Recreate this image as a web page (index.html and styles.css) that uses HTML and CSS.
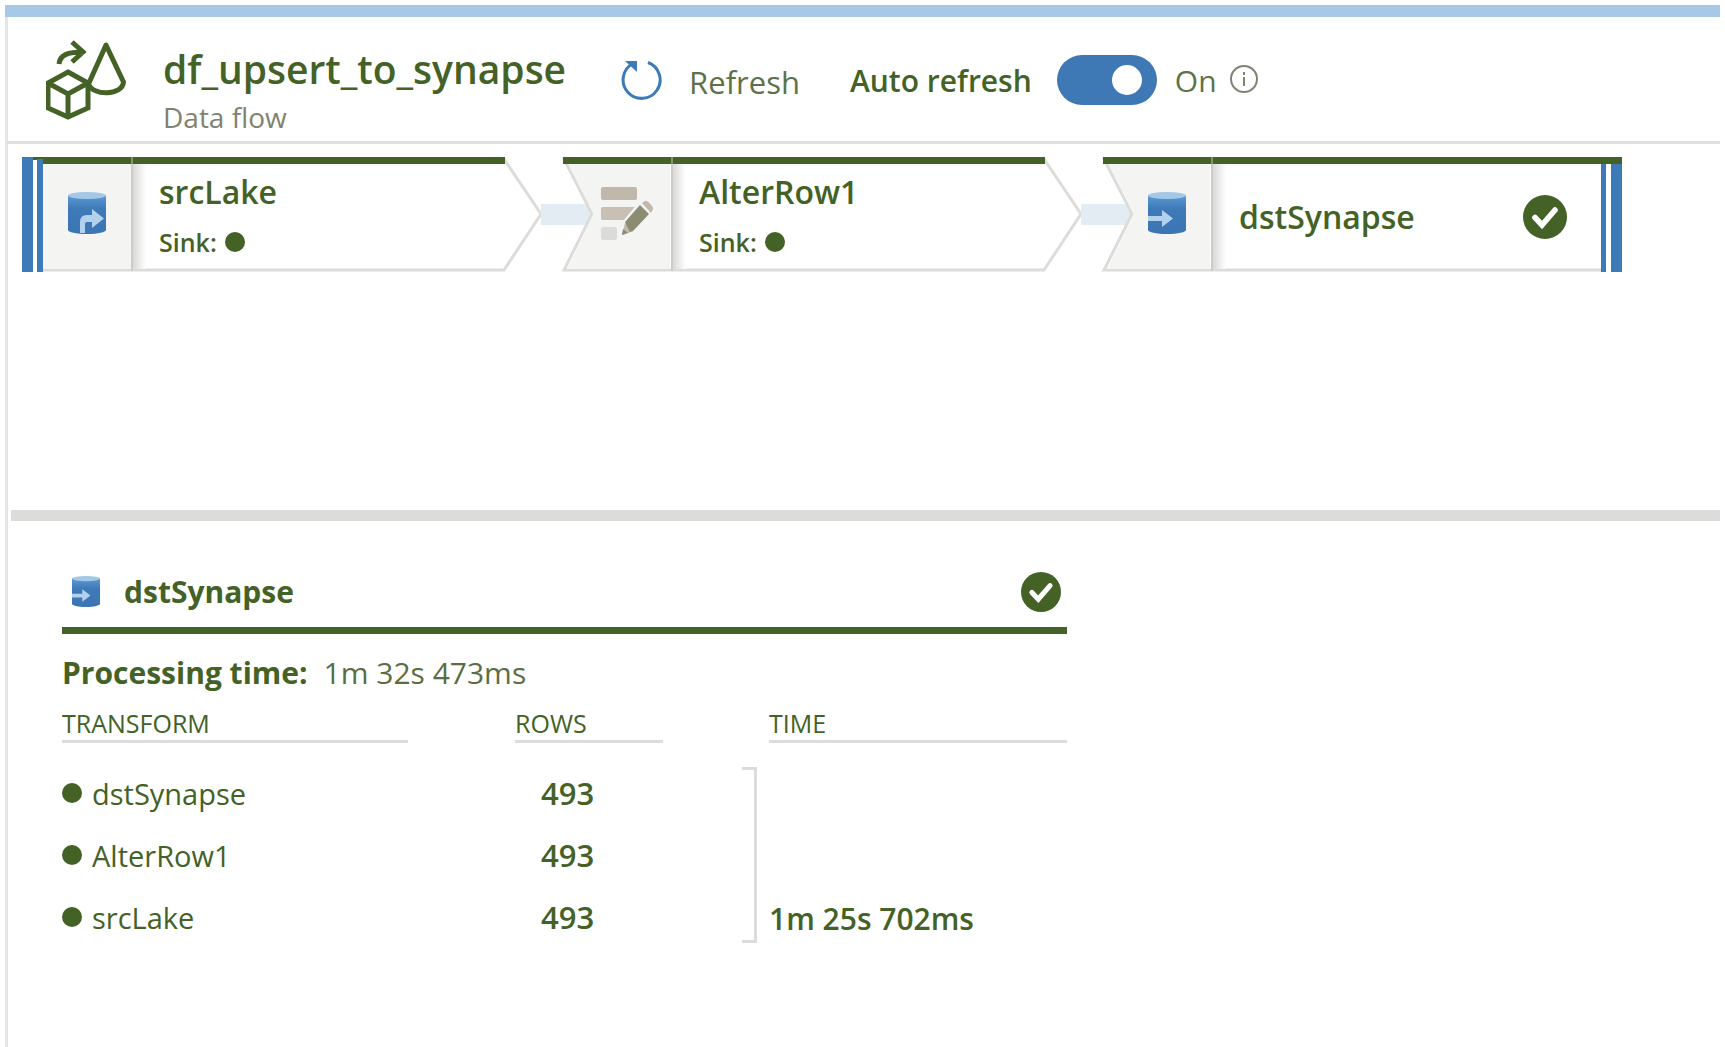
FILE: index.html
```html
<!DOCTYPE html>
<html lang="en">
<head>
<meta charset="utf-8">
<title>df_upsert_to_synapse</title>
<link rel="stylesheet" href="styles.css">
</head>
<body>
<svg class="defs" aria-hidden="true">
  <defs>
    <linearGradient id="cyl" x1="0" y1="0" x2="0" y2="1">
      <stop offset="0" stop-color="#5f9bd3"/><stop offset=".35" stop-color="#3e7ab8"/><stop offset="1" stop-color="#3c75b3"/>
    </linearGradient>
    <linearGradient id="shade" x1="0" y1="0" x2="1" y2="0">
      <stop offset="0" stop-color="#d6d6d5"/><stop offset="1" stop-color="#ffffff"/>
    </linearGradient>
    <symbol id="check" viewBox="0 0 44 44">
      <circle cx="22" cy="22" r="22" fill="#446126"/>
      <path d="M12 22.500l7 7.500L32 15" fill="none" stroke="#fff" stroke-width="5.600" stroke-linecap="round"/>
    </symbol>
    <symbol id="sink" viewBox="0 0 38 42">
      <path d="M0 3v35c0 2 8 4 19 4s19-2 19-4V3z" fill="url(#cyl)"/>
      <ellipse cx="19" cy="3.500" rx="19" ry="3.500" fill="#a3c8e8"/>
      <path d="M0 24h14v-6l11 8.500L14 35v-6H0z" fill="#b3d1ec"/>
    </symbol>
  </defs>
</svg>
<div class="app">
  <header class="header">
    <svg class="flow-icon" viewBox="0 0 80 80" fill="none" stroke="#446126" stroke-width="5" aria-hidden="true">
      <path d="M22 32l20 11v25L22 77 2 68V43z M2 43l20 11 20-11 M22 54v23"/>
      <path d="M60 5L77.500 42c-1 14-31 14-35 2z" stroke-linejoin="round"/>
      <path d="M13 24c1-9 8-12 25-12 M26 2l11 10-11 10"/>
    </svg>
    <div class="titles">
      <h1>df_upsert_to_synapse</h1>
      <p>Data flow</p>
    </div>
    <div class="controls">
      <button class="refresh" type="button">
        <svg viewBox="0 0 42 42" aria-hidden="true"><path d="M12 4.500a18.500 18.500 0 1 0 15-1" fill="none" stroke="#3e7ab8" stroke-width="3"/><path d="M4 2h12v11z" fill="#3e7ab8"/></svg>
        <span>Refresh</span>
      </button>
      <label class="auto" for="auto">Auto refresh</label>
      <input class="switch" id="auto" type="checkbox" role="switch" checked>
      <span class="state">On</span>
      <svg class="info" viewBox="0 0 30 30" fill="none" stroke="#7f8270" stroke-width="2" aria-hidden="true"><circle cx="15" cy="14" r="13"/><path d="M15 12v9M15 7v3"/></svg>
    </div>
  </header>

  <main>
    <section class="graph" aria-label="Graph">
      <article class="node">
        <svg class="shape" viewBox="0 0 520 116" aria-hidden="true">
          <path d="M2 2h480l37 55-37 56H2z" fill="#fff" stroke="#dcdcda" stroke-width="3"/>
          <path d="M21 6h88v106H21z" fill="#f4f4f3"/>
          <path d="M110 6h14v106h-14z" fill="url(#shade)"/>
          <path d="M110 3v111" stroke="#cdccc8" stroke-width="2"/>
          <path d="M11 0h472v7H11z" fill="#446126"/>
          <path d="M109 0h2v7h-2z" fill="#8b8f72"/>
          <path d="M11 3h5v112h-5z" fill="#fff"/>
          <path d="M0 0h11v115H0zM15 2h6v113h-6z" fill="#3e7ab8"/>
        </svg>
        <div class="glyph">
          <svg width="38" height="42" viewBox="0 0 38 42" aria-hidden="true">
            <path d="M0 3v35c0 2 8 4 19 4s19-2 19-4V3z" fill="url(#cyl)"/>
            <ellipse cx="19" cy="3.500" rx="19" ry="3.500" fill="#a3c8e8"/>
            <path d="M12 41V30q0-7 7-7h5v-6l12 9.500L24 36v-6h-5q-2 0-2 2v9z" fill="#b3d1ec"/>
          </svg>
        </div>
        <div class="body"><h2>srcLake</h2><p>Sink: <i class="dot"></i></p></div>
      </article>
      <article class="node">
        <svg class="shape" viewBox="0 0 520 116" aria-hidden="true">
          <path d="M-21 47h51v21h-51z" fill="#e4ecf3"/>
          <path d="M2 2h480l37 55-37 56H2l28-56z" fill="#fff" stroke="#dcdcda" stroke-width="3"/>
          <path d="M6 6h102v106H5l27-55z" fill="#f4f4f3"/>
          <path d="M110 6h14v106h-14z" fill="url(#shade)"/>
          <path d="M110 3v111" stroke="#cdccc8" stroke-width="2"/>
          <path d="M1 0h482v7H1z" fill="#446126"/>
          <path d="M109 0h2v7h-2z" fill="#8b8f72"/>
        </svg>
        <div class="glyph">
          <svg width="54" height="54" viewBox="0 0 54 54" aria-hidden="true">
            <rect x="1" y="1" width="36" height="13" rx="2" fill="#c0b8aa"/>
            <rect x="1" y="21" width="40" height="13" rx="2" fill="#c7c0b3"/>
            <rect x="1" y="41" width="16" height="13" rx="2" fill="#dbdbd9"/>
            <path d="M20 50l3-15 16-19h6l7 7v4L37 48z" fill="#f4f4f3"/>
            <path d="M22 49l3-12 9 8z" fill="#c0b8aa"/>
            <path d="M22 49l1-6 5 4zM25 36l15-17 9 9-15 16-4 2z" fill="#8a8d72"/>
            <path d="M42 17l3-2q2-1 7 5 2 3 0 5l-1 2z" fill="#c0b8aa"/>
          </svg>
        </div>
        <div class="body"><h2>AlterRow1</h2><p>Sink: <i class="dot"></i></p></div>
      </article>
      <article class="node">
        <svg class="shape" viewBox="0 0 520 116" aria-hidden="true">
          <path d="M-21 47h51v21h-51z" fill="#e4ecf3"/>
          <path d="M2 2h510v111H2l28-56z" fill="#fff" stroke="#dcdcda" stroke-width="3"/>
          <path d="M6 6h102v106H5l27-55z" fill="#f4f4f3"/>
          <path d="M110 6h14v106h-14z" fill="url(#shade)"/>
          <path d="M110 3v111" stroke="#cdccc8" stroke-width="2"/>
          <path d="M504 7h5v108h-5z" fill="#fff"/>
          <path d="M499 7h5v108h-5zM509 6h11v109h-11z" fill="#3e7ab8"/>
          <path d="M1 0h519v7H1z" fill="#446126"/>
          <path d="M109 0h2v7h-2z" fill="#8b8f72"/>
        </svg>
        <div class="glyph"><svg width="38" height="42" aria-hidden="true"><use href="#sink"/></svg></div>
        <div class="body single"><h2>dstSynapse</h2><svg width="44" height="44" role="img" aria-label="Succeeded"><use href="#check"/></svg></div>
      </article>
    </section>

    <section class="details">
      <div class="details-head">
        <svg width="28" height="31" aria-hidden="true"><use href="#sink"/></svg>
        <h2>dstSynapse</h2>
        <svg class="done" width="40" height="40" role="img" aria-label="Succeeded"><use href="#check"/></svg>
      </div>
      <p class="processing"><b>Processing time:</b> <span>1m 32s 473ms</span></p>
      <table>
        <colgroup><col class="c-transform"><col class="c-rows"><col></colgroup>
        <thead>
          <tr><th scope="col"><span>TRANSFORM</span></th><th scope="col"><span>ROWS</span></th><th scope="col"><span>TIME</span></th></tr>
        </thead>
        <tbody>
          <tr><td class="name"><i class="dot"></i>dstSynapse</td><td class="count">493</td><td class="time" rowspan="3"><div class="span"><span class="bracket"></span><span>1m 25s 702ms</span></div></td></tr>
          <tr><td class="name"><i class="dot"></i>AlterRow1</td><td class="count">493</td></tr>
          <tr><td class="name"><i class="dot"></i>srcLake</td><td class="count">493</td></tr>
        </tbody>
      </table>
    </section>
  </main>
</div>
</body>
</html>
```
FILE: styles.css
```css
* { box-sizing: border-box; }

body {
  margin: 0;
  padding: 5px 5px 0;
  background: #fff;
  color: #446126;
  font-family: "Open Sans", "Noto Sans", sans-serif;
  font-size: 30px;
}

h1, h2, p { margin: 0; font-weight: 600; }
svg { display: block; flex: none; }
.defs { position: absolute; width: 0; height: 0; }

.app {
  display: flex;
  flex-direction: column;
  min-height: calc(100vh - 5px);
  border-top: 12px solid #a6c9e8;
}
.app > * { border-left: 3px solid #e6e6e5; }
main { flex: 1; }

/* Header */
.header {
  display: flex;
  height: 127px;
  padding: 23px 0 0 38px;
  border-bottom: 3px solid #e0e0de;
}
.flow-icon { width: 80px; height: 80px; }
.titles { margin-left: 37px; }
h1 { font-size: 39px; line-height: 58px; }
.titles p { font-size: 28px; line-height: 38px; font-weight: 400; color: #7f8270; }

.controls { display: flex; align-items: center; height: 80px; margin-left: 55px; }
.refresh {
  display: flex;
  align-items: center;
  gap: 26px;
  padding: 0;
  border: 0;
  background: none;
  font: inherit;
  font-size: 31px;
  color: #5f7148;
  cursor: pointer;
}
.refresh svg { width: 42px; height: 42px; }
.refresh span { padding-top: 4px; }
.auto { margin-left: 50px; font-weight: 600; }
.switch {
  appearance: none;
  display: flex;
  align-items: center;
  justify-content: flex-end;
  width: 100px;
  height: 50px;
  margin: 0 18px 0 25px;
  padding-right: 15px;
  border-radius: 25px;
  background: #3e78b5;
}
.switch::before { content: ""; width: 30px; height: 30px; border-radius: 50%; background: #fff; }
.switch:not(:checked) { justify-content: flex-start; padding-left: 15px; background: #8a8d72; }
.state { color: #5f7148; }
.info { width: 30px; height: 30px; margin-left: 12px; }

/* Graph */
.graph {
  display: flex;
  align-items: flex-start;
  gap: 20px;
  height: 377px;
  margin-left: 3px;
  padding: 13px 0 0 11px;
  border-bottom: 11px solid #dcdcda;
  overflow: hidden;
}
.node { position: relative; display: flex; flex: none; width: 520px; height: 116px; }
.shape { position: absolute; top: 0; left: 0; width: 520px; height: 116px; overflow: visible; }
.glyph { position: relative; display: flex; align-items: center; justify-content: center; width: 112px; padding: 0 0 4px 18px; }
.body { position: relative; flex: 1; padding: 11px 0 0 25px; }
.body h2 { font-size: 32px; line-height: 48px; }
.body p { display: flex; align-items: center; gap: 8px; font-size: 25px; line-height: 52px; }
.single { display: flex; align-items: center; justify-content: space-between; padding: 3px 55px 0 25px; }
.dot { flex: none; width: 20px; height: 20px; border-radius: 50%; background: #446126; }

/* Details */
.details { max-width: 1059px; padding: 41px 0 0 54px; }
.details-head {
  display: flex;
  align-items: center;
  height: 72px;
  padding: 0 6px 6px 10px;
  border-bottom: 7px solid #446126;
}
.details-head h2 { margin-left: 24px; font-size: 30px; font-weight: 700; }
.done { margin-left: auto; }
.processing { display: flex; gap: 16px; line-height: 48px; margin-top: 15px; font-weight: 400; }
.processing span { color: #5a6d44; }

table { width: 100%; table-layout: fixed; border-collapse: collapse; }
.c-transform { width: 453px; }
.c-rows { width: 227px; }
th { padding: 9px 0 19px; text-align: left; font-size: 25px; font-weight: 400; line-height: 34px; }
th span { display: block; border-bottom: 3px solid #dcdcda; }
th:nth-child(1) { padding-right: 107px; }
th:nth-child(2) { padding-right: 79px; }
th:nth-child(3) { padding-left: 27px; }
td { padding: 0; height: 62px; font-weight: 600; }
.name { font-size: 29px; font-weight: 400; }
.name .dot { display: inline-block; margin-right: 10px; vertical-align: 2px; }
.count { padding-left: 26px; font-size: 31px; }
.time { padding-top: 5px; vertical-align: top; }
.span { display: flex; align-items: flex-end; gap: 12px; height: 176px; line-height: 48px; }
.bracket { align-self: stretch; width: 15px; border: 3px solid #dcdcda; border-left: 0; }
```
